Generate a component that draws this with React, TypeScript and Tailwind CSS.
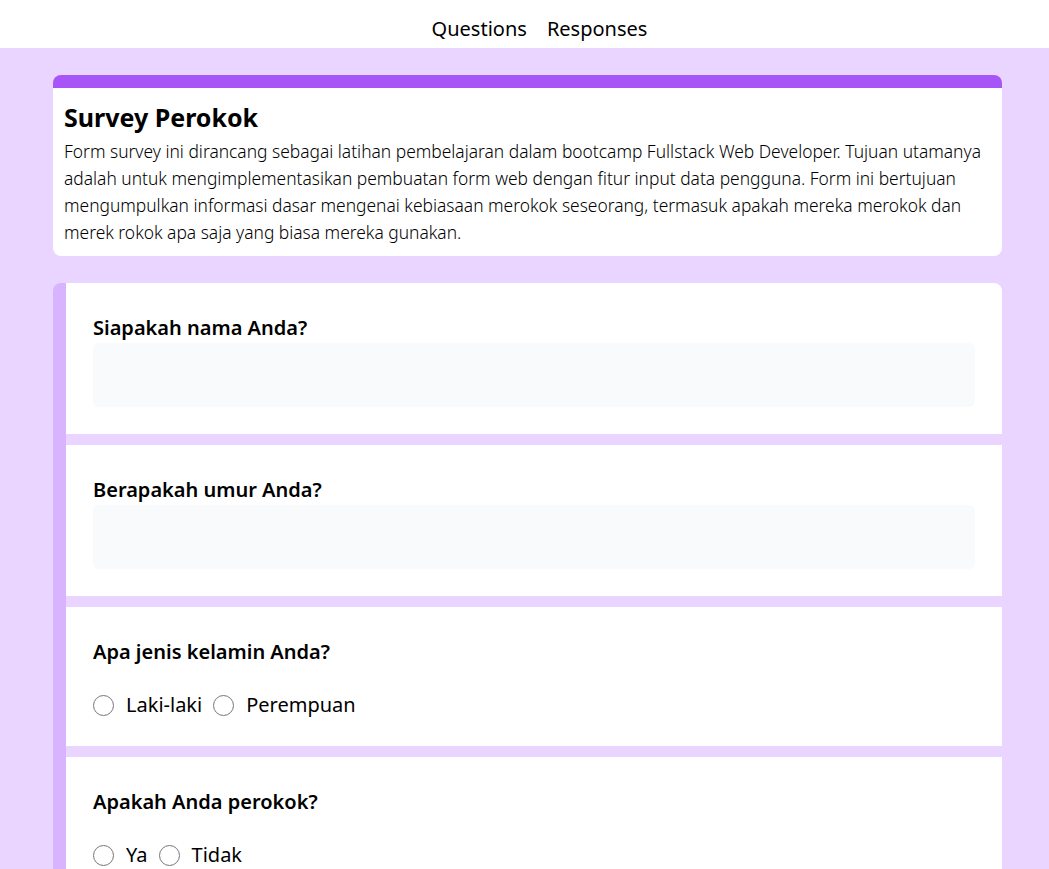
import React from "react";

const font = { fontFamily: '"Noto Sans", "Open Sans", sans-serif' };

function TextQuestion({ title }: { title: string }) {
  return (
    <div className="bg-white px-[27px] pt-[31px] pb-[27px]">
      <p className="text-[20px] leading-[28px] font-semibold text-black">{title}</p>
      <div className="mt-[1px] h-[64px] bg-[#f9fafb] rounded-md" />
    </div>
  );
}

function RadioQuestion({ title, options }: { title: string; options: string[] }) {
  return (
    <div className="bg-white px-[27px] pt-[31px] pb-[27px]">
      <p className="text-[20px] leading-[28px] font-semibold text-black">{title}</p>
      <div className="flex items-center mt-[25px] h-[28px]">
        {options.map((o) => (
          <label key={o} className="flex items-center text-[20px] text-black mr-[11px]">
            <span className="w-[21px] h-[21px] rounded-full border border-[#767676] bg-white mr-[12px]" />
            {o}
          </label>
        ))}
      </div>
    </div>
  );
}

export default function App() {
  return (
    <div className="min-h-[869px] bg-[#e9d5ff]" style={font}>
      <nav className="h-[48px] bg-white flex justify-center items-center gap-5 pt-[10px] pl-[30px] text-[20px] text-black">
        <span>Questions</span>
        <span>Responses</span>
      </nav>
      <main className="ml-[53px] w-[949px] pt-[27px] flex flex-col">
        <div className="bg-white rounded-lg border-t-[13px] border-[#a855f7] px-[11px] pt-[12px] pb-[10px] mb-[27px]">
          <h1 className="text-[25px] leading-[34px] font-bold text-black mb-[4px]">Survey Perokok</h1>
          <p className="text-[17.4px] leading-[27px] font-light text-black">
            Form survey ini dirancang sebagai latihan pembelajaran dalam bootcamp Fullstack Web Developer. Tujuan utamanya
            adalah untuk mengimplementasikan pembuatan form web dengan fitur input data pengguna. Form ini bertujuan
            mengumpulkan informasi dasar mengenai kebiasaan merokok seseorang, termasuk apakah mereka merokok dan merek
            rokok apa saja yang biasa mereka gunakan.
          </p>
        </div>
        <div className="flex flex-col gap-[11px] border-l-[13px] border-[#d8b4fe] rounded-t-lg overflow-hidden">
          <TextQuestion title="Siapakah nama Anda?" />
          <TextQuestion title="Berapakah umur Anda?" />
          <RadioQuestion title="Apa jenis kelamin Anda?" options={["Laki-laki", "Perempuan"]} />
          <RadioQuestion title="Apakah Anda perokok?" options={["Ya", "Tidak"]} />
        </div>
      </main>
    </div>
  );
}
